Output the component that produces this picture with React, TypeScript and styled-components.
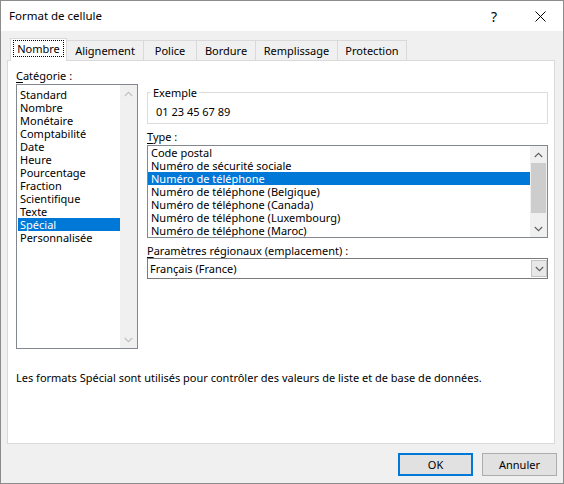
import React from "react";
import styled, { createGlobalStyle, css } from "styled-components";

const GlobalStyle = createGlobalStyle`
  * { box-sizing: border-box; }
  html, body { margin: 0; padding: 0; background: #ffffff; }
  body {
    font-family: "Noto Sans", "Open Sans", sans-serif;
    font-size: 11px;
    color: #000;
  }
  #root { width: 564px; height: 484px; }
`;

const Window = styled.div`
  width: 564px;
  height: 484px;
  border: 1px solid #8c8c8c;
  display: flex;
  flex-direction: column;
  background: #f0f0f0;
  overflow: hidden;
`;

const TitleBar = styled.div`
  height: 30px;
  flex-shrink: 0;
  background: #ffffff;
  display: flex;
  align-items: center;
  padding-left: 8px;
`;

const Title = styled.div`
  flex: 1;
  font-size: 11.5px;
  line-height: 14px;
`;

const CaptionButton = styled.div`
  width: 46px;
  height: 30px;
  display: flex;
  align-items: center;
  justify-content: center;
  font-size: 14px;
  color: #000;
`;

const Body = styled.div`
  flex: 1;
  display: flex;
  flex-direction: column;
  padding: 7px 0 0 6px;
  min-height: 0;
`;

const TabStrip = styled.div`
  height: 22px;
  flex-shrink: 0;
  display: flex;
  align-items: flex-end;
  padding-left: 3px;
`;

const Tab = styled.div<{ $w: number; $active?: boolean }>`
  width: ${(p) => p.$w}px;
  height: 20px;
  border: 1px solid #d9d9d9;
  border-bottom: none;
  background: #f0f0f0;
  display: flex;
  align-items: center;
  justify-content: center;
  line-height: 13px;
  white-space: nowrap;
  & + & { margin-left: -1px; }
  ${(p) =>
    p.$active &&
    css`
      height: 23px;
      margin-bottom: -1px;
      background: #ffffff;
      position: relative;
      z-index: 1;
      padding-bottom: 3px;
    `}
`;

const FocusLabel = styled.span`
  outline: 1px dotted #000;
  outline-offset: 1px;
  padding: 0 2px;
  line-height: 13px;
`;

const Panel = styled.div`
  flex: 1;
  margin-right: 8px;
  background: #ffffff;
  border: 1px solid #d9d9d9;
  padding: 8px 6px 0 8px;
  display: flex;
  flex-direction: column;
`;

const TopArea = styled.div`
  display: grid;
  grid-template-columns: 122px 1fr;
  column-gap: 9px;
`;

const Column = styled.div<{ $top?: number }>`
  display: flex;
  flex-direction: column;
  padding-top: ${(p) => p.$top ?? 0}px;
`;

const FieldLabel = styled.div<{ $mt?: number; $mb?: number }>`
  line-height: 13px;
  height: 13px;
  margin-top: ${(p) => p.$mt ?? 0}px;
  margin-bottom: ${(p) => p.$mb ?? 2}px;
  white-space: nowrap;
  u { text-decoration: underline; text-underline-offset: 2px; }
`;

const ListBox = styled.div<{ $h: number }>`
  height: ${(p) => p.$h}px;
  border: 1px solid #828790;
  background: #ffffff;
  display: flex;
  overflow: hidden;
`;

const Items = styled.div<{ $pad?: string }>`
  flex: 1;
  min-width: 0;
  padding: ${(p) => p.$pad ?? "0"};
  overflow: hidden;
`;

const Item = styled.div<{ $selected?: boolean }>`
  height: 13px;
  line-height: 13px;
  padding-left: 2px;
  white-space: nowrap;
  ${(p) =>
    p.$selected &&
    css`
      background: #0078d7;
      color: #ffffff;
    `}
`;

const TypeItem = styled(Item)`
  padding-left: 3px;
`;

const ScrollBar = styled.div`
  width: 17px;
  flex-shrink: 0;
  background: #f0f0f0;
  display: flex;
  flex-direction: column;
`;

const ScrollArrow = styled.div`
  height: 17px;
  flex-shrink: 0;
  display: flex;
  align-items: center;
  justify-content: center;
`;

const ScrollTrack = styled.div`
  flex: 1;
  display: flex;
  flex-direction: column;
  align-items: center;
`;

const Thumb = styled.div`
  width: 15px;
  background: #cdcdcd;
`;

const GroupBox = styled.fieldset`
  margin: 0;
  border: 1px solid #dcdcdc;
  padding: 6px 8px 5px 8px;
  min-width: 0;
`;

const Legend = styled.legend`
  padding: 0 2px;
  margin-left: -5px;
  line-height: 13px;
`;

const Sample = styled.div`
  line-height: 13px;
`;

const Combo = styled.div`
  height: 21px;
  border: 1px solid #7a7a7a;
  background: #ffffff;
  display: flex;
  align-items: center;
`;

const ComboText = styled.div`
  flex: 1;
  padding-left: 2px;
  line-height: 13px;
`;

const ComboButton = styled.div`
  width: 16px;
  height: 17px;
  background: #e8e8e8;
  border: 1px solid #c4c4c4;
  display: flex;
  align-items: center;
  justify-content: center;
`;

const Description = styled.div`
  margin-top: 22px;
  line-height: 13px;
  white-space: nowrap;
`;

const Footer = styled.div`
  height: 39px;
  flex-shrink: 0;
  display: flex;
  justify-content: flex-end;
  align-items: flex-start;
  gap: 9px;
  padding: 9px 6px 0 0;
`;

const Button = styled.div<{ $default?: boolean }>`
  width: 75px;
  height: 23px;
  background: #e1e1e1;
  border: 1px solid #adadad;
  display: flex;
  align-items: center;
  justify-content: center;
  line-height: 13px;
  ${(p) =>
    p.$default &&
    css`
      border: 2px solid #0078d7;
    `}
`;

const Chevron = ({ dir, color }: { dir: "up" | "down"; color: string }) => (
  <svg width="9" height="6" viewBox="0 0 9 6">
    <path
      d={dir === "up" ? "M0.8 5 L4.5 1.3 L8.2 5" : "M0.8 1 L4.5 4.7 L8.2 1"}
      fill="none"
      stroke={color}
      strokeWidth="1.1"
    />
  </svg>
);

const CloseIcon = () => (
  <svg width="11" height="11" viewBox="0 0 11 11">
    <path d="M0.5 0.5 L10.5 10.5 M10.5 0.5 L0.5 10.5" stroke="#000" strokeWidth="1" />
  </svg>
);

const tabs = [
  { label: "Nombre", w: 57, active: true },
  { label: "Alignement", w: 78 },
  { label: "Police", w: 54 },
  { label: "Bordure", w: 60 },
  { label: "Remplissage", w: 83 },
  { label: "Protection", w: 70 },
];

const categories = [
  "Standard",
  "Nombre",
  "Monétaire",
  "Comptabilité",
  "Date",
  "Heure",
  "Pourcentage",
  "Fraction",
  "Scientifique",
  "Texte",
  "Spécial",
  "Personnalisée",
];

const types = [
  "Code postal",
  "Numéro de sécurité sociale",
  "Numéro de téléphone",
  "Numéro de téléphone (Belgique)",
  "Numéro de téléphone (Canada)",
  "Numéro de téléphone (Luxembourg)",
  "Numéro de téléphone (Maroc)",
  "Numéro de téléphone (Suisse)",
];

const TYPE_VISIBLE = 7;
const TYPE_TRACK = 91 - 34 - 6;

export default function App() {
  const thumbH = Math.round((TYPE_VISIBLE / types.length) * (TYPE_TRACK + 6));
  return (
    <>
      <GlobalStyle />
      <Window>
        <TitleBar>
          <Title>Format de cellule</Title>
          <CaptionButton>?</CaptionButton>
          <CaptionButton>
            <CloseIcon />
          </CaptionButton>
        </TitleBar>
        <Body>
          <TabStrip>
            {tabs.map((t) =>
              t.active ? (
                <Tab key={t.label} $w={t.w} $active>
                  <FocusLabel>{t.label}</FocusLabel>
                </Tab>
              ) : (
                <Tab key={t.label} $w={t.w}>
                  {t.label}
                </Tab>
              )
            )}
          </TabStrip>
          <Panel>
            <TopArea>
              <Column>
                <FieldLabel>
                  <u>C</u>atégorie :
                </FieldLabel>
                <ListBox $h={265}>
                  <Items $pad="3px 0 0 1px">
                    {categories.map((c) => (
                      <Item key={c} $selected={c === "Spécial"}>
                        {c}
                      </Item>
                    ))}
                  </Items>
                  <ScrollBar>
                    <ScrollArrow>
                      <Chevron dir="up" color="#bfbfbf" />
                    </ScrollArrow>
                    <ScrollTrack />
                    <ScrollArrow>
                      <Chevron dir="down" color="#bfbfbf" />
                    </ScrollArrow>
                  </ScrollBar>
                </ListBox>
              </Column>
              <Column $top={17}>
                <GroupBox>
                  <Legend>Exemple</Legend>
                  <Sample>01 23 45 67 89</Sample>
                </GroupBox>
                <FieldLabel $mt={6}>
                  <u>T</u>ype :
                </FieldLabel>
                <ListBox $h={93}>
                  <Items>
                    {types.map((t) => (
                      <TypeItem key={t} $selected={t === "Numéro de téléphone"}>
                        {t}
                      </TypeItem>
                    ))}
                  </Items>
                  <ScrollBar>
                    <ScrollArrow>
                      <Chevron dir="up" color="#606060" />
                    </ScrollArrow>
                    <ScrollTrack>
                      <Thumb style={{ height: thumbH }} />
                    </ScrollTrack>
                    <ScrollArrow>
                      <Chevron dir="down" color="#606060" />
                    </ScrollArrow>
                  </ScrollBar>
                </ListBox>
                <FieldLabel $mt={6} $mb={1}>
                  <u>P</u>aramètres régionaux (emplacement) :
                </FieldLabel>
                <Combo>
                  <ComboText>Français (France)</ComboText>
                  <ComboButton>
                    <Chevron dir="down" color="#606060" />
                  </ComboButton>
                </Combo>
              </Column>
            </TopArea>
            <Description>
              Les formats Spécial sont utilisés pour contrôler des valeurs de liste et de base de données.
            </Description>
          </Panel>
          <Footer>
            <Button $default>OK</Button>
            <Button>Annuler</Button>
          </Footer>
        </Body>
      </Window>
    </>
  );
}
